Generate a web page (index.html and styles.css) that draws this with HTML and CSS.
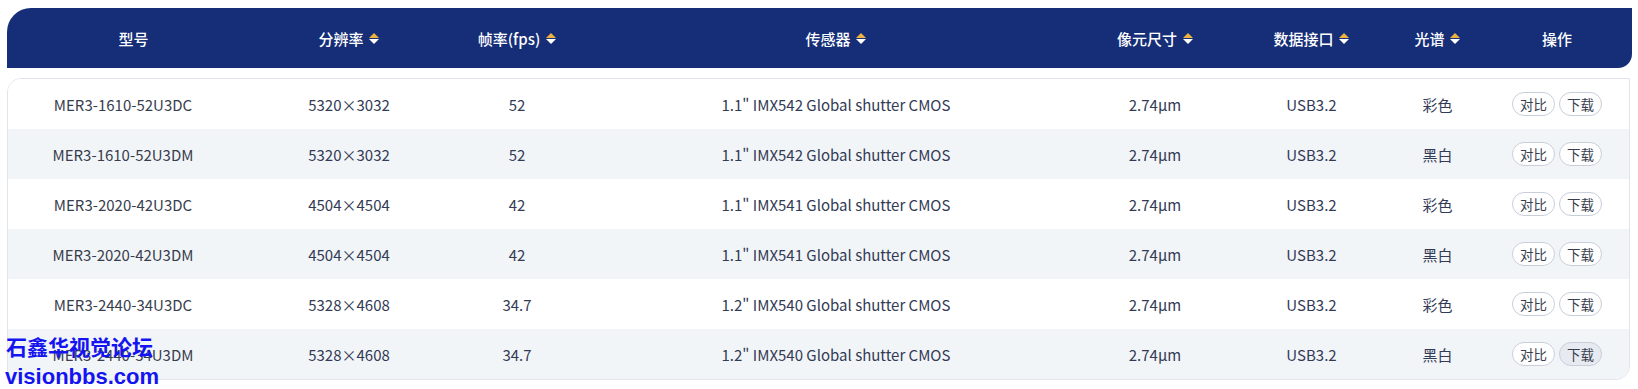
FILE: index.html
```html
<!DOCTYPE html>
<html lang="zh-CN">
<head>
<meta charset="utf-8">
<title>产品列表</title>
<link rel="stylesheet" href="styles.css">
</head>
<body>
<div class="page">
  <div class="thead">
    <div class="th">型号</div>
    <div class="th">分辨率<span class="sort"><i class="up"></i><i class="down"></i></span></div>
    <div class="th">帧率(fps)<span class="sort"><i class="up"></i><i class="down"></i></span></div>
    <div class="th">传感器<span class="sort"><i class="up"></i><i class="down"></i></span></div>
    <div class="th">像元尺寸<span class="sort"><i class="up"></i><i class="down"></i></span></div>
    <div class="th">数据接口<span class="sort"><i class="up"></i><i class="down"></i></span></div>
    <div class="th">光谱<span class="sort"><i class="up"></i><i class="down"></i></span></div>
    <div class="th">操作</div>
    <div class="th"></div>
  </div>
  <div class="tbody">
    <div class="tr">
      <div class="td model">MER3-1610-52U3DC</div><div class="td">5320×3032</div><div class="td">52</div><div class="td">1.1" IMX542 Global shutter CMOS</div><div class="td">2.74μm</div><div class="td">USB3.2</div><div class="td">彩色</div>
      <div class="td ops"><span class="btn">对比</span><span class="btn">下载</span></div><div class="td"></div>
    </div>
    <div class="tr alt">
      <div class="td model">MER3-1610-52U3DM</div><div class="td">5320×3032</div><div class="td">52</div><div class="td">1.1" IMX542 Global shutter CMOS</div><div class="td">2.74μm</div><div class="td">USB3.2</div><div class="td">黑白</div>
      <div class="td ops"><span class="btn">对比</span><span class="btn">下载</span></div><div class="td"></div>
    </div>
    <div class="tr">
      <div class="td model">MER3-2020-42U3DC</div><div class="td">4504×4504</div><div class="td">42</div><div class="td">1.1" IMX541 Global shutter CMOS</div><div class="td">2.74μm</div><div class="td">USB3.2</div><div class="td">彩色</div>
      <div class="td ops"><span class="btn">对比</span><span class="btn">下载</span></div><div class="td"></div>
    </div>
    <div class="tr alt">
      <div class="td model">MER3-2020-42U3DM</div><div class="td">4504×4504</div><div class="td">42</div><div class="td">1.1" IMX541 Global shutter CMOS</div><div class="td">2.74μm</div><div class="td">USB3.2</div><div class="td">黑白</div>
      <div class="td ops"><span class="btn">对比</span><span class="btn">下载</span></div><div class="td"></div>
    </div>
    <div class="tr">
      <div class="td model">MER3-2440-34U3DC</div><div class="td">5328×4608</div><div class="td">34.7</div><div class="td">1.2" IMX540 Global shutter CMOS</div><div class="td">2.74μm</div><div class="td">USB3.2</div><div class="td">彩色</div>
      <div class="td ops"><span class="btn">对比</span><span class="btn">下载</span></div><div class="td"></div>
    </div>
    <div class="tr alt">
      <div class="td model">MER3-2440-34U3DM</div><div class="td">5328×4608</div><div class="td">34.7</div><div class="td">1.2" IMX540 Global shutter CMOS</div><div class="td">2.74μm</div><div class="td">USB3.2</div><div class="td">黑白</div>
      <div class="td ops"><span class="btn">对比</span><span class="btn hover">下载</span></div><div class="td"></div>
    </div>
  </div>
  <div class="watermark">
    <div class="wm-cn">石鑫华视觉论坛</div>
    <div class="wm-en">visionbbs.com</div>
  </div>
</div>
</body>
</html>
```
FILE: styles.css
```css
* { box-sizing: border-box; }
html, body { margin: 0; padding: 0; background: #fff; }
body {
  font-family: "Noto Sans CJK SC", "Noto Sans", sans-serif;
  font-size: 15px;
  color: #323a55;
}
.page {
  position: relative;
  padding: 8px 6px 0 7px;
  width: 1638px;
  height: 389px;
  overflow: hidden;
}
.thead {
  display: grid;
  grid-template-columns: 253px 178px 158px 480px 158px 155px 97px 142px 1fr;
  height: 60px;
  background: #152e77;
  border-radius: 24px 0 14px 0;
  color: #fff;
  font-size: 15px;
  font-weight: 500;
}
.th {
  display: flex;
  align-items: center;
  justify-content: center;
  gap: 5px;
  line-height: 1;
}
.sort {
  display: inline-flex;
  flex-direction: column;
  gap: 1px;
  width: 11px;
  align-items: center;
}
.sort i {
  display: block;
  width: 0;
  height: 0;
  border-left: 5.5px solid transparent;
  border-right: 5.5px solid transparent;
}
.sort .up { border-bottom: 5px solid #f0b23e; }
.sort .down { border-top: 5px solid #ffffff; }
.tbody {
  margin-top: 10px;
  margin-right: 2px;
  border: 1px solid #e1e5eb;
  border-radius: 14px 0 14px 0;
  overflow: hidden;
}
.tr {
  display: grid;
  grid-template-columns: 252px 178px 158px 480px 158px 155px 97px 142px 1fr;
  height: 50px;
  background: #fff;
}
.tr.alt { background: #f2f5f8; }
.td {
  display: flex;
  align-items: center;
  justify-content: center;
  white-space: nowrap;
}
.td.model { padding-right: 22px; color: #383e4e; }
.ops { gap: 4px; }
.btn {
  display: inline-flex;
  align-items: center;
  justify-content: center;
  width: 43px;
  height: 24px;
  border: 1px solid #c9cedb;
  border-radius: 12px;
  font-size: 13.5px;
  color: #383e4e;
  background: #fff;
}
.btn.hover { background: #e7eaf0; }
.watermark {
  position: absolute;
  left: 6px;
  top: 336px;
  color: #1414f0;
  font-weight: 700;
  line-height: 1;
}
.wm-cn {
  font-family: "Noto Sans CJK SC", sans-serif;
  font-size: 21px;
}
.wm-en {
  margin-top: 9px;
  margin-left: -1px;
  font-family: "Liberation Sans", Arial, sans-serif;
  font-size: 22px;
}
```
